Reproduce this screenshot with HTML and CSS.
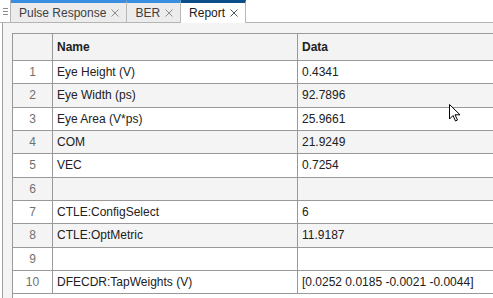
FILE: index.html
```html
<!DOCTYPE html>
<html lang="en">
<head>
  <meta charset="UTF-8">
  <title>Report</title>
  <link rel="stylesheet" href="styles.css">
</head>
<body>
  <!-- tab strip -->
  <div class="tabbar">
    <div class="grip">
      <svg width="5" height="7" viewBox="0 0 5 7"><path d="M0 0.5h5M0 3.5h5M0 6.5h5" stroke="#8a8a8a" stroke-width="1"/></svg>
    </div>
    <div class="tab">
      <span>Pulse Response</span>
      <svg class="close" width="8" height="8" viewBox="0 0 8 8"><path d="M0.5 0.5l7 7M7.5 0.5l-7 7" stroke="#8c8c8c" stroke-width="1"/></svg>
    </div>
    <div class="tab">
      <span>BER</span>
      <svg class="close" width="8" height="8" viewBox="0 0 8 8"><path d="M0.5 0.5l7 7M7.5 0.5l-7 7" stroke="#8c8c8c" stroke-width="1"/></svg>
    </div>
    <div class="tab active">
      <span>Report</span>
      <svg class="close" width="8" height="8" viewBox="0 0 8 8"><path d="M0.5 0.5l7 7M7.5 0.5l-7 7" stroke="#555" stroke-width="1"/></svg>
    </div>
    <div class="filler"></div>
  </div>

  <!-- report table -->
  <div class="panel">
    <div class="grid">
      <table>
        <thead>
          <tr><th class="idx"></th><th class="name">Name</th><th>Data</th></tr>
        </thead>
        <tbody>
          <tr><td class="idx">1</td><td>Eye Height (V)</td><td>0.4341</td></tr>
          <tr class="alt"><td class="idx">2</td><td>Eye Width (ps)</td><td>92.7896</td></tr>
          <tr><td class="idx">3</td><td>Eye Area (V*ps)</td><td>25.9661</td></tr>
          <tr class="alt"><td class="idx">4</td><td>COM</td><td>21.9249</td></tr>
          <tr><td class="idx">5</td><td>VEC</td><td>0.7254</td></tr>
          <tr class="alt"><td class="idx">6</td><td></td><td></td></tr>
          <tr><td class="idx">7</td><td>CTLE:ConfigSelect</td><td>6</td></tr>
          <tr class="alt"><td class="idx">8</td><td>CTLE:OptMetric</td><td>11.9187</td></tr>
          <tr><td class="idx">9</td><td></td><td></td></tr>
          <tr><td class="idx">10</td><td>DFECDR:TapWeights (V)</td><td>[0.0252 0.0185 -0.0021 -0.0044]</td></tr>
        </tbody>
      </table>
    </div>
  </div>

  <!-- mouse pointer -->
  <svg class="cursor" width="12" height="18" viewBox="0 0 12 18">
    <path d="M0.5 0.5v14.5l3.5-3.5 2.5 5.5 2-1-2.5-5.2h5z" fill="#fff" stroke="#000" stroke-width="1" stroke-linejoin="miter"/>
  </svg>
</body>
</html>
```

FILE: styles.css
```css
body {
  margin: 0;
  font-family: "Liberation Sans", Arial, sans-serif;
  font-size: 12px;
  color: #212121;
  background-color: #fff;
  height: 298px;
  overflow: hidden;
  position: relative;
}
.tabbar {
  display: flex;
  height: 22px;
  border-bottom: 1px solid #b4b4b4;
}
.grip {
  width: 11px;
  border-right: 1px solid #b4b4b4;
  display: flex;
  justify-content: center;
  padding-top: 8px;
  box-sizing: border-box;
}
.tab {
  display: flex;
  align-items: center;
  gap: 5px;
  padding: 0 7px 0 8px;
  background-color: #ececec;
  border-top: 3px solid #3a8ee0;
  border-right: 1px solid #b8b8b8;
  color: #404040;
  font-size: 12px;
}
.tab.active {
  background-color: #fff;
  border-top-color: #0d4f8b;
  color: #1a1a1a;
  margin-bottom: -1px;
}
.close {
  display: block;
}
.filler {
  flex: 1;
}
.panel {
  margin-left: 2px;
  border-left: 1px solid #a0a0a0;
  background-color: #f4f4f4;
  padding: 10px 0 0 9px;
  height: 275px;
  overflow: hidden;
}
.grid {
  background-color: #fff;
  border-left: 1px solid #999;
  border-top: 1px solid #999;
  height: 100%;
  overflow: hidden;
}
table {
  border-collapse: collapse;
  table-layout: fixed;
  width: 540px;
}
th, td {
  border-right: 1px solid #999;
  border-bottom: 1px solid #999;
  text-align: left;
  padding: 0 0 0 4px;
  white-space: nowrap;
}
th {
  height: 26px;
  background-color: #f3f3f3;
  font-weight: bold;
}
td {
  height: 22.33px;
}
.idx {
  width: 35px;
  padding: 0;
  text-align: center;
  color: #707070;
}
th.idx {
  width: 39px;
}
.name {
  width: 240px;
}
.alt td {
  background-color: #f4f4f4;
}
.cursor {
  position: absolute;
  left: 449px;
  top: 104px;
}
```
